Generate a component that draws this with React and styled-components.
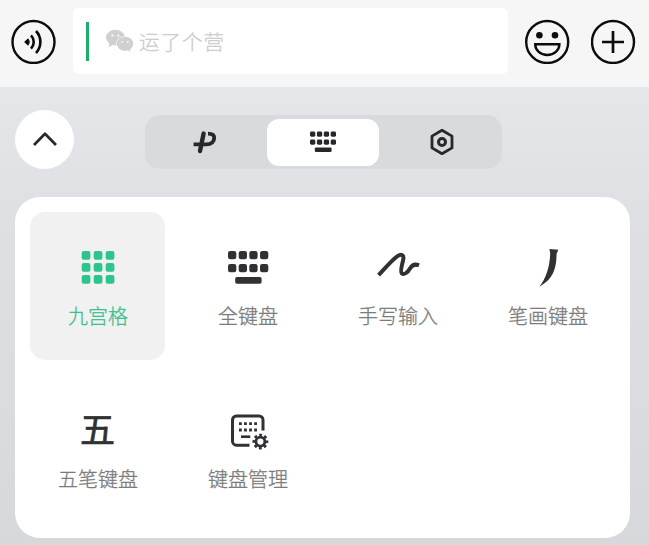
import React, { useState } from 'react'
import styled, { createGlobalStyle } from 'styled-components'

const GlobalStyle = createGlobalStyle`
    * {
        box-sizing: border-box;
    }
    body {
        margin: 0;
        font-family: "Noto Sans CJK SC", "Noto Sans", sans-serif;
    }
    svg {
        display: block;
    }
    button {
        padding: 0;
        border: none;
        background: none;
        font-family: inherit;
        cursor: pointer;
    }
`

const Screen = styled.div`
    width: 649px;
    height: 545px;
    display: flex;
    flex-direction: column;
    overflow: hidden;
`

const ChatBar = styled.div`
    height: 87px;
    flex: none;
    display: flex;
    align-items: flex-start;
    padding: 8px 13px 0 11px;
    background-color: #f6f6f6;
`

const RoundButton = styled.button`
    width: 45px;
    height: 45px;
    margin-top: 11px;
    margin-left: ${props => props.$left || "0"};
`

const Input = styled.div`
    width: 435px;
    height: 66px;
    margin-left: 17px;
    padding: 0 13px;
    display: flex;
    align-items: center;
    border-radius: 6px;
    background-color: #ffffff;
`

const Caret = styled.span`
    width: 3px;
    height: 39px;
    margin-right: 17px;
    background-color: #1fae6b;
`

const Placeholder = styled.span`
    margin-left: 5px;
    font-size: 20.5px;
    font-weight: 300;
    line-height: 30px;
    letter-spacing: 1px;
    color: #cccccc;
    -webkit-text-stroke: 0.3px currentColor;
`

const Keyboard = styled.div`
    flex: 1;
    padding: 23px 19px 7px 15px;
    background: linear-gradient(#e4e7ea 0%, #dfe0e4 25%, #d6d8db 100%);
`

const Toolbar = styled.div`
    display: flex;
    align-items: center;
    height: 59px;
`

const CollapseButton = styled.button`
    width: 59px;
    height: 59px;
    padding-bottom: 2px;
    border-radius: 50%;
    background-color: #ffffff;
    display: flex;
    align-items: center;
    justify-content: center;
`

const Tabs = styled.div`
    width: 357px;
    height: 54px;
    margin: 5px 0 0 71px;
    padding-right: 1px;
    border-radius: 15px;
    background-color: #d9dade;
    display: grid;
    grid-template-columns: repeat(3, 1fr);
    align-items: center;
    justify-items: center;
`

const Tab = styled.button`
    width: 112px;
    height: 47px;
    border-radius: 12px;
    display: flex;
    align-items: center;
    justify-content: center;
    background-color: ${props => props.$active ? "#ffffff" : "transparent"};
`

const Panel = styled.div`
    height: 341px;
    margin-top: 28px;
    padding: 15px;
    border-radius: 25px;
    background-color: #ffffff;
    display: grid;
    grid-template-columns: repeat(4, 135px);
    grid-auto-rows: 148px;
    gap: 15px;
`

const Tile = styled.button`
    display: flex;
    flex-direction: column;
    align-items: center;
    padding-top: 34px;
    border-radius: 15px;
    color: ${props => props.$active ? "#2dc48d" : "#303133"};
    background-color: ${props => props.$active ? "#f1f1f1" : "transparent"};
`

const TileIcon = styled.span`
    width: 44px;
    height: 44px;
    display: flex;
    align-items: center;
    justify-content: center;
`

const WubiMark = styled.span`
    font-size: 35px;
    font-weight: 400;
    line-height: 38px;
    padding-bottom: 6px;
    -webkit-text-stroke: 0.7px currentColor;
`

const TileLabel = styled.span`
    margin-top: 12px;
    padding-left: 1px;
    font-size: 20px;
    font-weight: 300;
    line-height: 28px;
    white-space: nowrap;
    color: ${props => props.$active ? "#3cbf90" : "#7b7b7b"};
    -webkit-text-stroke: 0.3px currentColor;
`

const VoiceIcon = () => (
    <svg width="45" height="45" viewBox="0 0 45 45" fill="none" stroke="#0c0c0c">
        <circle cx="22.5" cy="23" r="21" strokeWidth="2.4" />
        <path d="M14 23l3-2.8a4.5 4.5 0 0 1 0 5.6z" fill="#0c0c0c" strokeWidth="1.2" strokeLinejoin="round" />
        <path d="M20 16.3a9.6 9.6 0 0 1 0 13.4M25 12a16 16 0 0 1 0 22" strokeWidth="2.6" />
    </svg>
)

const SmileIcon = () => (
    <svg width="45" height="45" viewBox="0 0 45 45" fill="none" stroke="#0c0c0c" strokeWidth="2.4">
        <circle cx="22.2" cy="23" r="21" />
        <circle cx="14.4" cy="16.3" r="3.3" fill="#0c0c0c" stroke="none" />
        <circle cx="30" cy="16.3" r="3.3" fill="#0c0c0c" stroke="none" />
        <path d="M10.2 25.2h24.2a12.1 10.8 0 0 1-24.2 0z" />
    </svg>
)

const PlusIcon = () => (
    <svg width="45" height="45" viewBox="0 0 45 45" fill="none" stroke="#0c0c0c" strokeWidth="2.4">
        <circle cx="22" cy="23" r="21" />
        <path d="M22 12v22M11 23h22" strokeWidth="2.7" />
    </svg>
)

const WeChatIcon = () => (
    <svg width="28" height="24" viewBox="0 0 28 24">
        <g fill="#d0d0d0">
            <ellipse cx="9.4" cy="8.6" rx="9.4" ry="7.8" />
            <path d="M3.6 13l-.8 5.2 5-2.8z" />
            <ellipse cx="19" cy="14.8" rx="8.8" ry="7.6" fill="#ffffff" />
            <ellipse cx="19" cy="14.8" rx="8.3" ry="7.1" />
            <path d="M20 20l4.2 3-.3-4.6z" />
        </g>
        <g fill="#ffffff">
            <circle cx="6.4" cy="6.6" r="1.1" />
            <circle cx="12.4" cy="6.6" r="1.1" />
            <circle cx="16.2" cy="12.8" r="0.9" />
            <circle cx="21.7" cy="12.8" r="0.9" />
        </g>
    </svg>
)

const ChevronIcon = () => (
    <svg width="26" height="16" viewBox="0 0 26 16" fill="none" stroke="#27282b" strokeWidth="2.7">
        <path d="M2 14L13 2.8l11 11.2" strokeLinejoin="round" />
    </svg>
)

const LogoIcon = () => (
    <svg width="26" height="26" viewBox="0 0 26 26" fill="none" stroke="#27282b">
        <path d="M12.6 4.6L9 22" strokeWidth="4.4" strokeLinecap="round" />
        <path d="M2.6 15.4H15.2C20.4 15.4 23.2 12.4 23.2 9C23.2 5.6 21.3 4.6 17 4.6" strokeWidth="3.9" />
    </svg>
)

const SmallKeyboardIcon = () => (
    <svg width="28" height="22" viewBox="0 0 28 22" fill="#27282b">
        {[1, 7.9, 14.8, 21.7].map(x => (
            <React.Fragment key={x}>
                <rect x={x} y="0.5" width="5.3" height="5.2" rx="1.4" />
                <rect x={x} y="8.5" width="5.3" height="5.2" rx="1.4" />
            </React.Fragment>
        ))}
        <rect x="5.8" y="16.6" width="16.8" height="4.4" rx="1.2" />
    </svg>
)

const HexagonIcon = () => (
    <svg width="26" height="28" viewBox="0 0 26 28" fill="none" stroke="#27282b" strokeWidth="2.8">
        <path d="M13 2.3l10 5.8v11.8L13 25.7l-10-5.8V8.1z" strokeLinejoin="round" />
        <circle cx="13" cy="14" r="3.5" strokeWidth="3" />
    </svg>
)

const NineGridIcon = () => (
    <svg width="44" height="44" viewBox="0 0 44 44" fill="currentColor">
        {[5, 17, 29].map(y => [5.7, 17.7, 29.7].map(x => (
            <rect key={`${x}-${y}`} x={x} y={y} width="8.7" height="8.7" rx="2" />
        )))}
    </svg>
)

const FullKeyboardIcon = () => (
    <svg width="44" height="44" viewBox="0 0 44 44" fill="currentColor">
        {[5, 18].map(y => [2, 12.7, 23.3, 34].map(x => (
            <rect key={`${x}-${y}`} x={x} y={y} width="8.3" height="8.3" rx="2.2" />
        )))}
        <rect x="9.2" y="31" width="26.4" height="6.7" rx="1.8" />
    </svg>
)

const HandwritingIcon = () => (
    <svg width="44" height="44" viewBox="0 0 44 44" fill="none" stroke="currentColor" strokeWidth="4">
        <path d="M2.6 29.2C7 24.5 16.5 13.5 21.5 10.2C25.6 7.6 28 9 27.3 13.2C26.6 17.5 23.6 25.5 25.8 27.4C28 29.2 31.8 26.5 33.8 22.8C35.8 19.3 38.5 17.4 43 19.4" />
    </svg>
)

const StrokeIcon = () => (
    <svg width="44" height="44" viewBox="0 0 44 44" fill="currentColor">
        <path d="M23.4 2.9L32.4 3.8L30.6 7.8C30.4 23.5 26.8 33.2 13.3 40.7C20.2 32.5 23.8 20 24.2 7.5Z" />
    </svg>
)

const ManageIcon = () => (
    <svg width="44" height="44" viewBox="0 0 44 44" fill="none" stroke="currentColor" strokeWidth="3">
        <path d="M23.5 36.2H10.5a4 4 0 0 1-4-4V11a4 4 0 0 1 4-4h22.5a4 4 0 0 1 4 4v10.5" />
        <path d="M13 14.6h18M13 21h18" strokeWidth="2.8" strokeDasharray="2.8 2.26" />
        <path d="M15 27.7h9.3" strokeWidth="2.6" />
        <circle cx="34.4" cy="32.6" r="4.5" strokeWidth="2.8" />
        <circle cx="34.4" cy="32.6" r="6.6" strokeWidth="2.6" strokeDasharray="2.8 2.384" strokeDashoffset="1.4" />
    </svg>
)

const tabs = [
    { id: "logo", icon: <LogoIcon /> },
    { id: "keyboard", icon: <SmallKeyboardIcon /> },
    { id: "settings", icon: <HexagonIcon /> },
]

const layouts = [
    { label: "九宫格", icon: <NineGridIcon /> },
    { label: "全键盘", icon: <FullKeyboardIcon /> },
    { label: "手写输入", icon: <HandwritingIcon /> },
    { label: "笔画键盘", icon: <StrokeIcon /> },
    { label: "五笔键盘", icon: <WubiMark>五</WubiMark> },
    { label: "键盘管理", icon: <ManageIcon /> },
]

const App = () => {
    const [tab, setTab] = useState("keyboard")
    const [layout, setLayout] = useState("九宫格")

    return (
        <Screen>
            <GlobalStyle />
            <ChatBar>
                <RoundButton><VoiceIcon /></RoundButton>
                <Input>
                    <Caret />
                    <WeChatIcon />
                    <Placeholder>运了个营</Placeholder>
                </Input>
                <RoundButton $left="17px"><SmileIcon /></RoundButton>
                <RoundButton $left="21px"><PlusIcon /></RoundButton>
            </ChatBar>
            <Keyboard>
                <Toolbar>
                    <CollapseButton><ChevronIcon /></CollapseButton>
                    <Tabs>
                        {tabs.map(({ id, icon }) => (
                            <Tab key={id} $active={tab === id} onClick={() => setTab(id)}>{icon}</Tab>
                        ))}
                    </Tabs>
                </Toolbar>
                <Panel>
                    {layouts.map(({ label, icon }) => (
                        <Tile key={label} $active={layout === label} onClick={() => setLayout(label)}>
                            <TileIcon>{icon}</TileIcon>
                            <TileLabel $active={layout === label}>{label}</TileLabel>
                        </Tile>
                    ))}
                </Panel>
            </Keyboard>
        </Screen>
    )
}

export default App
